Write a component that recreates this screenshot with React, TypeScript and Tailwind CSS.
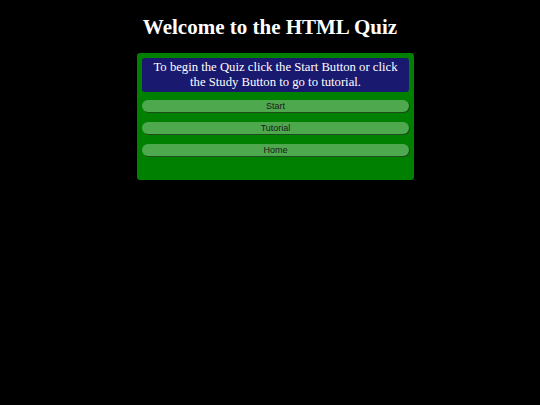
export default function App() {
  const buttons = ["Start", "Tutorial", "Home"];
  return (
    <div className="min-h-[405px] w-full bg-black pt-[15px]">
      <h1 className="text-center text-[21px] font-bold leading-[24px] text-white [font-family:'Liberation_Serif',serif]">
        Welcome to the HTML Quiz
      </h1>
      <div className="ml-[calc(50%-133px)] mt-[14px] h-[127px] w-[277px] rounded-[3px] bg-[#008000] p-[5px]">
        <div className="flex h-[34px] flex-col items-center justify-center rounded-[3px] bg-[#191970] text-center text-[12.7px] leading-[15px] text-white [font-family:'Liberation_Serif',serif]">
          <span>To begin the Quiz click the Start Button or click</span>
          <span>the Study Button to go to tutorial.</span>
        </div>
        <div className="mt-[8px] flex flex-col gap-[10px]">
          {buttons.map((b) => (
            <div
              key={b}
              className="flex h-[12px] items-center justify-center rounded-full bg-[#4ea84e] pt-px text-[9px] text-[#1a1a1a] shadow-[1px_1px_0_#1a4d1a] [font-family:'Liberation_Sans',sans-serif]"
            >
              {b}
            </div>
          ))}
        </div>
      </div>
    </div>
  );
}
